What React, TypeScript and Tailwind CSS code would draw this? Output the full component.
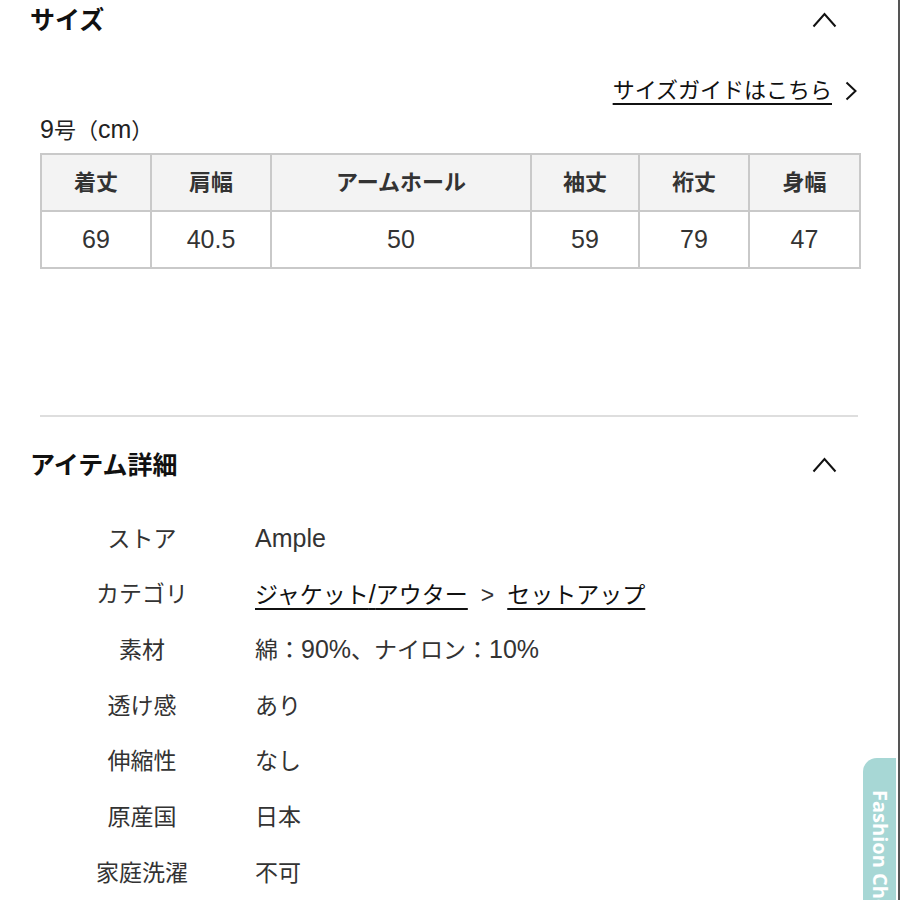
import type { ReactNode } from "react";

const jp = "font-['Liberation_Sans','Noto_Sans_CJK_JP',sans-serif]";

const sizes = [
  { label: "着丈", value: "69", width: "w-[110px]" },
  { label: "肩幅", value: "40.5", width: "w-[120px]" },
  { label: "アームホール", value: "50", width: "w-[260px]" },
  { label: "袖丈", value: "59", width: "w-[108px]" },
  { label: "裄丈", value: "79", width: "w-[110px]" },
  { label: "身幅", value: "47", width: "w-[111px]" },
];

// latin glyphs sit a bit larger than the kana in the original font
function L({ children }: { children: ReactNode }) {
  return <span className="text-[25px]">{children}</span>;
}

function ChevronUp() {
  return (
    <svg width="25" height="16" viewBox="0 0 25 16" fill="none" aria-hidden="true">
      <polyline points="1.5,14.5 12.5,2 23.5,14.5" stroke="#111" strokeWidth="2" />
    </svg>
  );
}

function SectionHeader({ title }: { title: string }) {
  return (
    <div className="flex items-center justify-between pl-[30px] pr-[61px]">
      <h2 className="text-[25px] font-bold leading-[30px] text-[#111]">{title}</h2>
      <ChevronUp />
    </div>
  );
}

function DetailRow({ label, children }: { label: string; children: ReactNode }) {
  return (
    <div className="grid h-[55.7px] grid-cols-[204px_1fr] items-center gap-x-[11px]">
      <span className="text-center text-[23px] text-[#333]">{label}</span>
      <span className="text-[23px] text-[#333]">{children}</span>
    </div>
  );
}

export default function App() {
  return (
    <div className={`relative h-[900px] w-[900px] overflow-hidden border-r-2 border-[#555] bg-white ${jp}`}>
      <section className="pt-[5px]">
        <SectionHeader title="サイズ" />
        <div className="px-[40px]">
          <div className="mt-[41px] flex items-center justify-end gap-[13px] pr-[1px]">
            <a className="text-[22px] leading-[30px] text-[#111] underline decoration-[2px] underline-offset-[5px]">
              サイズガイドはこちら
            </a>
            <svg width="12" height="20" viewBox="0 0 12 20" fill="none" aria-hidden="true">
              <polyline points="1.5,1.5 10.5,10 1.5,18.5" stroke="#111" strokeWidth="2" />
            </svg>
          </div>
          <p className="mt-[9px] text-[22px] leading-[28px] text-[#222]">
            <L>9</L>号（<L>cm</L>）
          </p>
          <table className="mt-[8px] w-[819px] table-fixed border-collapse border-2 border-[#c9c9c9] text-[#333]">
            <colgroup>
              {sizes.map((s) => (
                <col key={s.label} className={s.width} />
              ))}
            </colgroup>
            <thead>
              <tr className="h-[57px] bg-[#f3f3f3]">
                {sizes.map((s) => (
                  <th key={s.label} className="border-2 border-[#c9c9c9] text-[22px] font-bold">
                    {s.label}
                  </th>
                ))}
              </tr>
            </thead>
            <tbody>
              <tr className="h-[57px]">
                {sizes.map((s) => (
                  <td key={s.label} className="border-2 border-[#c9c9c9] text-center text-[25px]">
                    {s.value}
                  </td>
                ))}
              </tr>
            </tbody>
          </table>
          <div className="mt-[146px] h-[2px] bg-[#dedede]" />
        </div>
      </section>

      <section className="pt-[33px]">
        <SectionHeader title="アイテム詳細" />
        <div className="mt-[31px] px-[40px]">
          <DetailRow label="ストア">
            <L>Ample</L>
          </DetailRow>
          <DetailRow label="カテゴリ">
            <a className="text-[#111] underline decoration-[2px] underline-offset-[5px]">
              ジャケット<L>/</L>アウター
            </a>
            <span className="mx-[13px] text-[#333]">&gt;</span>
            <a className="text-[#111] underline decoration-[2px] underline-offset-[5px]">セットアップ</a>
          </DetailRow>
          <DetailRow label="素材">
            綿：<L>90%</L>、ナイロン：<L>10%</L>
          </DetailRow>
          <DetailRow label="透け感">あり</DetailRow>
          <DetailRow label="伸縮性">なし</DetailRow>
          <DetailRow label="原産国">日本</DetailRow>
          <DetailRow label="家庭洗濯">不可</DetailRow>
        </div>
      </section>

      <div className="absolute right-[2px] top-[758px] flex h-[160px] w-[33px] justify-center overflow-hidden rounded-tl-[14px] bg-[#a7d7d5] pt-[32px]">
        <span className="whitespace-nowrap font-['Open_Sans',sans-serif] text-[20px] font-bold leading-none text-white [writing-mode:vertical-rl]">
          Fashion Check
        </span>
      </div>
    </div>
  );
}
